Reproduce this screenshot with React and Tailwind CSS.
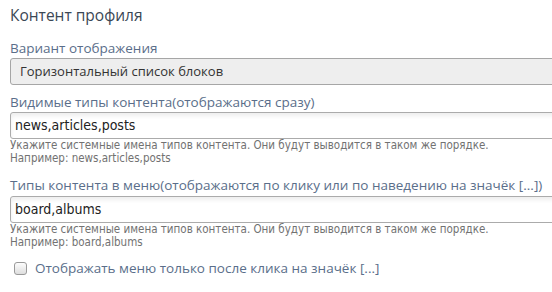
export default function App() {
  const label = "text-[13.5px] leading-[16px] text-[#5a6e8a] [font-family:'Open_Sans',sans-serif]";
  const hint = "text-[11.5px] leading-[13px] text-[#727272] font-stretch-condensed [font-family:'DejaVu_Sans_Condensed','DejaVu_Sans',sans-serif]";
  const input =
    "h-[27px] w-[560px] rounded-[3px] border border-[#ababab] bg-white pl-[4px] flex items-center text-[14px] text-[#222] font-stretch-condensed shadow-[inset_0_3px_4px_rgba(0,0,0,0.07)] [font-family:'DejaVu_Sans_Condensed','DejaVu_Sans',sans-serif]";
  return (
    <div className="w-[552px] h-[292px] overflow-hidden bg-white pl-[10px] pt-[3px]">
      <div className="text-[15.5px] leading-[24px] text-[#3b4755] [font-family:'Open_Sans',sans-serif]">
        Контент профиля
      </div>
      <div className={label + " mt-[13px]"}>Вариант отображения</div>
      <div className="mt-[2px] h-[27px] w-[560px] rounded-[3px] border border-[#a6a6a6] bg-[#eeeeee] pl-[9px] flex items-center text-[13px] text-[#333] [font-family:'Open_Sans',sans-serif]">
        Горизонтальный список блоков
      </div>
      <div className={label + " mt-[9px]"}>Видимые типы контента(отображаются сразу)</div>
      <div className={input + " mt-[2px]"}>news,articles,posts</div>
      <div className={hint}>
        Укажите системные имена типов контента. Они будут выводится в таком же порядке.
      </div>
      <div className={hint}>Например: news,articles,posts</div>
      <div className={label + " mt-[12px]"}>
        Типы контента в меню(отображаются по клику или по наведению на значёк [...])
      </div>
      <div className={input + " mt-[3px]"}>board,albums</div>
      <div className={hint}>
        Укажите системные имена типов контента. Они будут выводится в таком же порядке.
      </div>
      <div className={hint}>Например: board,albums</div>
      <div className="mt-[11px] flex items-center pl-[4px]">
        <span className="h-[13px] w-[13px] rounded-[3px] border border-[#9a9a9a] bg-gradient-to-b from-[#fdfdfd] to-[#dedede]" />
        <span className={label + " ml-[8px]"}>
          Отображать меню только после клика на значёк [...]
        </span>
      </div>
    </div>
  );
}
